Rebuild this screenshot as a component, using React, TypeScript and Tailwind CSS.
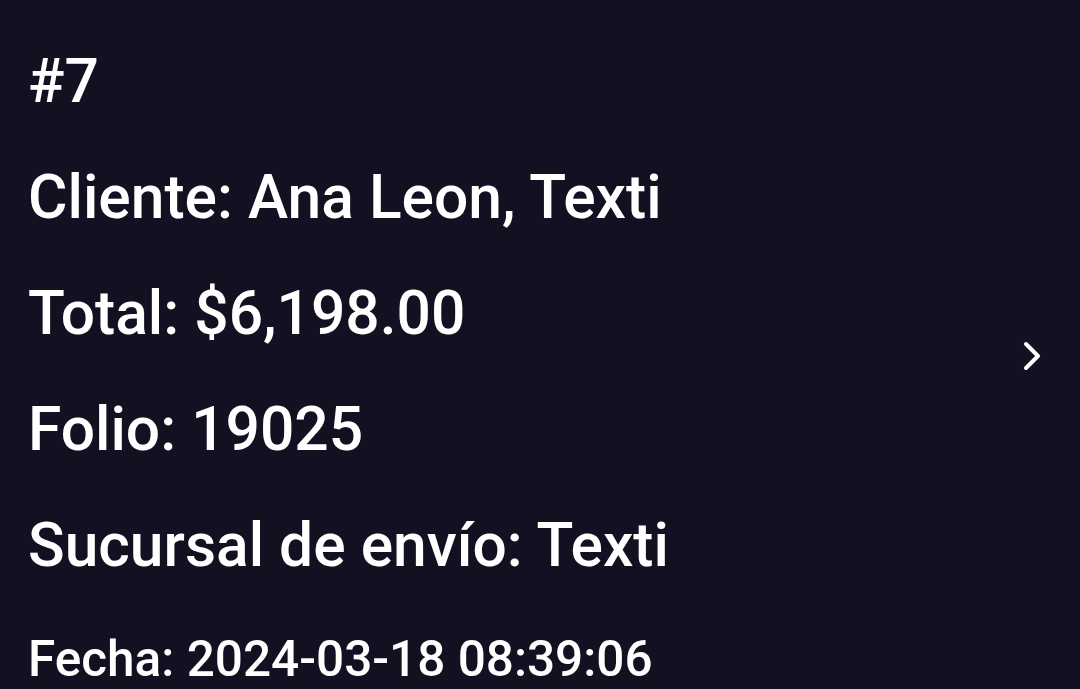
const rows = ['#7', 'Cliente: Ana Leon, Texti', 'Total: $6,198.00', 'Folio: 19025', 'Sucursal de envío: Texti'];

export default function App() {
  return (
    <div className="h-[689px] w-[1080px] overflow-hidden bg-[#121122] text-white" style={{ fontFamily: 'Roboto, "Noto Sans", sans-serif' }}>
      <div className="flex items-center pl-[28px] pr-[38px] pt-[24px]">
        <div className="flex-1">
          {rows.map((r) => (
            <div key={r} className="h-[116px] text-[60.5px] leading-[116px] font-medium whitespace-nowrap">
              {r}
            </div>
          ))}
          <div className="h-[110px] origin-left scale-x-[0.99] text-[50px] leading-[110px] font-medium whitespace-nowrap">
            Fecha: 2024-03-18 08:39:06
          </div>
        </div>
        {/* flecha para ver el detalle */}
        <div className="-mt-[26px]">
          <svg width="20" height="32" viewBox="0 0 20 32" fill="none" stroke="currentColor" strokeWidth="4" strokeLinecap="round" strokeLinejoin="round">
            <path d="M4 4 L16 16 L4 28" />
          </svg>
        </div>
      </div>
    </div>
  );
}
